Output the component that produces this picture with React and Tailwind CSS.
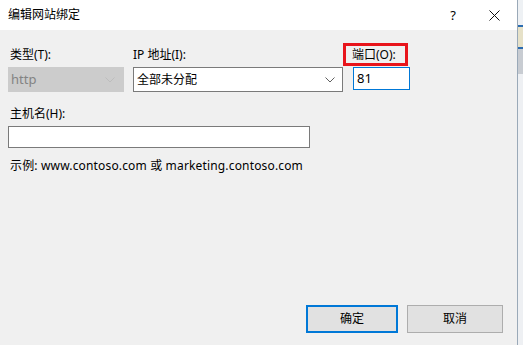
import React from "react";

const font = { fontFamily: '"Noto Sans", "Noto Sans CJK SC", sans-serif' };

function Chevron({ color = "#606060" }) {
  return (
    <svg width="10" height="6" viewBox="0 0 10 6" fill="none">
      <path d="M0.5 0.5 L5 5 L9.5 0.5" stroke={color} strokeWidth="1" />
    </svg>
  );
}

export default function App() {
  return (
    <div
      className="w-[523px] h-[345px] flex overflow-hidden text-[12px] text-black font-['Noto_Sans','Noto_Sans_CJK_SC',sans-serif]"
      style={font}
    >
      <div className="w-[518px] h-full flex flex-col border-r border-[#9aa9b8]">
        <div className="h-[30px] bg-white flex items-center pl-[8px] pr-[14px]">
          <span className="flex-1 text-[12px] leading-none">编辑网站绑定</span>
          <span className="w-[20px] text-center text-[13px] mr-[26px] leading-none">?</span>
          <svg width="11" height="11" viewBox="0 0 11 11" className="mr-[3px]">
            <path d="M0.5 0.5 L10.5 10.5 M10.5 0.5 L0.5 10.5" stroke="#111" strokeWidth="1" />
          </svg>
        </div>
        <div className="flex-1 bg-[#f0f0f0] flex flex-col pl-[8px] pt-[12px] pb-[12px]">
          <div className="flex">
            <div className="w-[116px] flex flex-col">
              <div className="h-[25px] flex items-center pl-[2px]">类型(T):</div>
              <div className="h-[25px] bg-[#cccccc] flex items-center pl-[3px] pr-[9px] text-[#838383]">
                <span className="flex-1 text-[13px]">http</span>
                <Chevron color="#bdbdbd" />
              </div>
            </div>
            <div className="w-[210px] ml-[9px] flex flex-col">
              <div className="h-[25px] flex items-center">IP 地址(I):</div>
              <div className="h-[25px] bg-white border border-[#7a7a7a] flex items-center pl-[3px] pr-[7px]">
                <span className="flex-1">全部未分配</span>
                <Chevron />
              </div>
            </div>
            <div className="flex flex-col">
              <div className="h-[25px] flex items-start pt-[1px]">
                <div className="w-[65px] h-[23px] border-[3px] border-[#e8141b] flex items-center pl-[6px] leading-none">
                  端口(O):
                </div>
              </div>
              <div className="ml-[10px] w-[57px] h-[23px] bg-white border border-[#0078d7] flex items-center pl-[3px] text-[13px]">
                81
              </div>
            </div>
          </div>
          <div className="h-[24px] mt-[10px] flex items-center pl-[2px]">主机名(H):</div>
          <div className="w-[302px] h-[22px] bg-white border border-[#7a7a7a]"></div>
          <div className="mt-[9px] pl-[2px] h-[18px] flex items-center tracking-[0.16px]">
            示例: www.contoso.com 或 marketing.contoso.com
          </div>
          <div className="mt-auto flex justify-end pr-[14px] gap-[9px]">
            <button className="w-[92px] h-[28px] bg-[#e1e1e1] border-2 border-[#0078d7] flex items-center justify-center">
              确定
            </button>
            <button className="w-[96px] h-[28px] bg-[#e1e1e1] border border-[#adadad] flex items-center justify-center">
              取消
            </button>
          </div>
        </div>
      </div>
      <div className="flex-1 bg-[#e3e6ea] flex flex-col">
        <div className="h-[25px] bg-[#eef1f4]"></div>
        <div className="h-[2px] bg-[#2b6cb0]"></div>
        <div className="h-[20px] bg-[#e6e1c8]"></div>
        <div className="h-[2px] bg-[#2b6cb0]"></div>
        <div className="h-[25px] bg-[#c8ccd2]"></div>
        <div className="flex-1 bg-[#eef0f3]"></div>
      </div>
    </div>
  );
}
